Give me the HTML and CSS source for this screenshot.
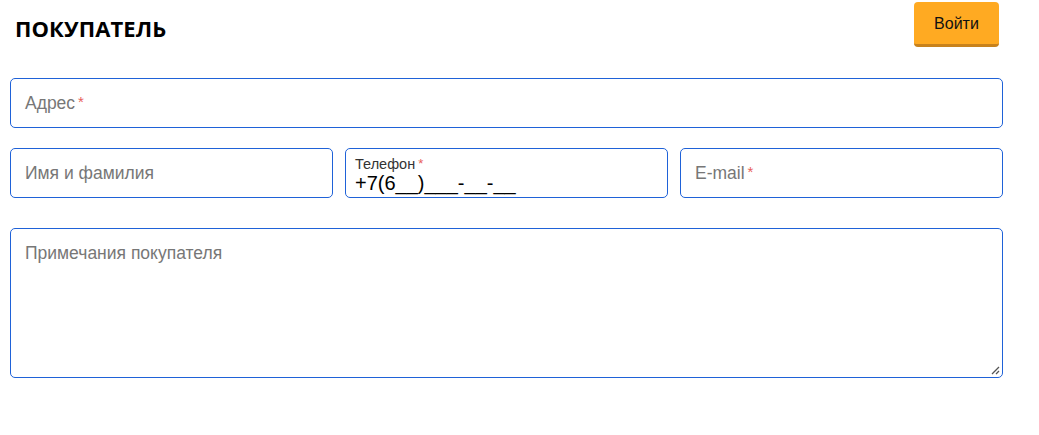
FILE: index.html
```html
<!DOCTYPE html>
<html lang="ru">
<head>
<meta charset="UTF-8" />
<meta name="viewport" content="width=device-width, initial-scale=1" />
<title>Покупатель</title>
<link rel="stylesheet" href="styles.css">
</head>
<body>

<div class="buyer">
  <div class="buyer-head">
    <h2>ПОКУПАТЕЛЬ</h2>
    <button class="btn-login" type="button">Войти</button>
  </div>

  <div class="field">
    <span class="placeholder">Адрес<span class="req">*</span></span>
  </div>

  <div class="row">
    <div class="field">
      <span class="placeholder">Имя и фамилия</span>
    </div>
    <div class="field field-filled">
      <span class="label">Телефон<span class="req">*</span></span>
      <span class="value">+7(6__)___-__-__</span>
    </div>
    <div class="field">
      <span class="placeholder">E-mail<span class="req">*</span></span>
    </div>
  </div>

  <div class="field field-area">
    <span class="placeholder">Примечания покупателя</span>
    <svg class="grip" width="10" height="10" viewBox="0 0 10 10">
      <path d="M9 2 L2 9 M9 6 L6 9" stroke="#555" stroke-width="1.3" fill="none" />
    </svg>
  </div>
</div>

</body>
</html>
```

FILE: styles.css
```css
body {
  margin: 0;
  font-family: Arial, "Liberation Sans", sans-serif;
  background: #fff;
}

.buyer {
  width: 993px;
  padding: 2px 0 0 10px;
}

.buyer-head {
  display: flex;
  justify-content: space-between;
  align-items: flex-start;
  height: 76px;
}
.buyer-head h2 {
  margin: 12px 0 0 5px;
  font-family: "Open Sans", sans-serif;
  font-weight: 700;
  font-size: 22px;
  line-height: 28px;
  letter-spacing: 0.1px;
  color: #000;
}

/* Кнопка Войти */
.btn-login {
  margin-right: 4px;
  width: 85px;
  height: 45px;
  background: #ffaa22;
  border: none;
  border-bottom: 3px solid #c8821c;
  border-radius: 4px;
  color: #111;
  font-family: inherit;
  font-size: 16px;
  padding: 2px 0 0;
  cursor: pointer;
}

.field {
  position: relative;
  box-sizing: border-box;
  height: 50px;
  border: 1px solid #1f62d8;
  border-radius: 5px;
  padding: 0 14px;
  display: flex;
  flex-direction: column;
  justify-content: center;
  margin-bottom: 20px;
}
.placeholder {
  font-size: 17.5px;
  color: #777;
}
.req {
  color: #e8605a;
  font-size: 15px;
  margin-left: 3px;
  vertical-align: top;
}

.row {
  display: grid;
  grid-template-columns: repeat(3, 1fr);
  gap: 12px;
  margin-bottom: 10px;
}

.field-filled {
  padding: 7px 9px 0;
  justify-content: flex-start;
}
.field-filled .label {
  font-size: 14.5px;
  line-height: 16px;
  color: #333;
}
.field-filled .label .req {
  font-size: 13px;
}
.field-filled .value {
  font-size: 20px;
  line-height: 22px;
  color: #000;
}

.field-area {
  height: 150px;
  justify-content: flex-start;
  padding-top: 14px;
}
.grip {
  position: absolute;
  right: 2px;
  bottom: 2px;
}
```
